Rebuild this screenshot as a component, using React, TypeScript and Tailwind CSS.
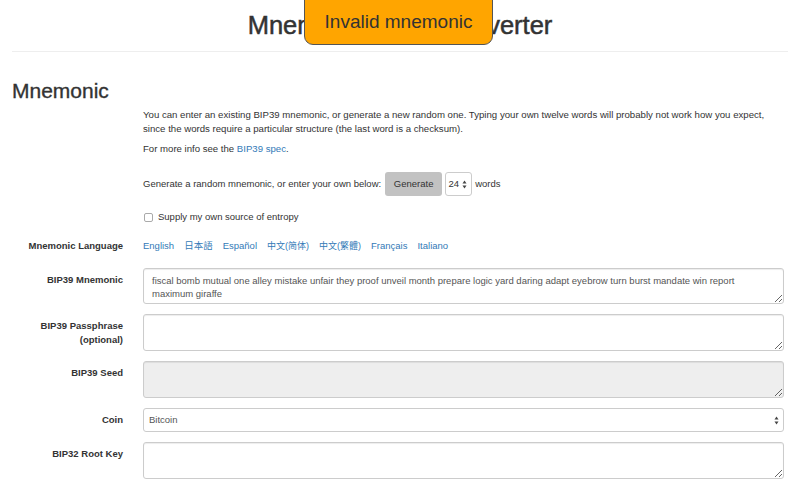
export default function App() {
  const languages = ['English', '日本語', 'Español', '中文(简体)', '中文(繁體)', 'Français', 'Italiano'];

  const Arrows = () => (
    <svg width="5" height="9" viewBox="0 0 5 9" className="text-[#444]">
      <path d="M2.5 0.5 L4.5 3.5 L0.5 3.5 Z" fill="currentColor" />
      <path d="M2.5 8.5 L4.5 5.5 L0.5 5.5 Z" fill="currentColor" />
    </svg>
  );

  const textareaCls =
    'block w-full resize-y rounded-[3px] border border-[#ccc] px-[8px] py-[5px] text-[9.5px] leading-[13px] text-[#555] shadow-[inset_0_1px_1px_rgba(0,0,0,0.075)] outline-none';

  return (
    <div
      className="relative h-[496px] w-full overflow-hidden bg-white text-[9.5px] leading-[14px] text-[#333]"
      style={{ fontFamily: '"Liberation Sans", "Noto Sans CJK SC", Arial, sans-serif' }}
    >
      {/* error toast over the heading */}
      <div className="absolute left-[304px] top-[-10px] flex h-[55px] w-[189px] items-end justify-center rounded-b-[9px] border border-[#555] bg-[#ffa500] pb-[11px]">
        <span className="text-[19px] leading-[22px] text-[#333]">Invalid mnemonic</span>
      </div>

      <div className="px-[12px] pt-[11px]">
        <h1 className="text-center text-[25.5px] font-medium leading-[28px] text-[#333] [-webkit-text-stroke:0.5px_#333]">
          Mnemonic Code Converter
        </h1>
        <hr className="mt-[12px] border-t border-[#eee]" />

        <h2 className="mt-[27px] text-[21px] font-medium leading-[23px] [-webkit-text-stroke:0.35px_#333]">Mnemonic</h2>

        <div className="grid grid-cols-[111px_1fr] gap-x-[20px] pr-[4px]">
          <div />
          <div className="pt-[6px]">
            <p className="text-[9.65px]">
              You can enter an existing BIP39 mnemonic, or generate a new random one. Typing your own twelve words will
              probably not work how you expect, since the words require a particular structure (the last word is a
              checksum).
            </p>
            <p className="mt-[6px] text-[9.6px]">
              For more info see the <span className="text-[#337ab7]">BIP39 spec</span>.
            </p>

            <div className="mt-[16px] flex h-[24px] items-center">
              <span>Generate a random mnemonic, or enter your own below:</span>
              <button className="ml-[4px] h-[24px] w-[57px] rounded-[3px] bg-[#c2c2c2] text-[9.5px] text-[#333]">
                Generate
              </button>
              <div className="ml-[3px] flex h-[24px] w-[27px] items-center justify-end gap-[3px] rounded-[3px] border border-[#ccc] pr-[4px]">
                <span>24</span>
                <Arrows />
              </div>
              <span className="ml-[3px]">words</span>
            </div>

            <div className="mt-[14px] flex items-center gap-[5px] pl-[1px]">
              <span className="h-[9px] w-[9px] rounded-[2px] border border-[#aaa] bg-white" />
              <span>Supply my own source of entropy</span>
            </div>
          </div>

          <div className="mt-[15px] text-right font-bold">Mnemonic Language</div>
          <div className="mt-[15px] flex items-center gap-[10px] text-[#337ab7]">
            {languages.map((l) => (
              <span key={l} className={l.startsWith('中文') ? 'text-[9px]' : ''}>
                {l}
              </span>
            ))}
          </div>

          <div className="mt-[15px] pt-[5px] text-right font-bold">BIP39 Mnemonic</div>
          <div className="mt-[15px]">
            <textarea
              className={`${textareaCls} h-[36px]`}
              defaultValue="fiscal bomb mutual one alley mistake unfair they proof unveil month prepare logic yard daring adapt eyebrow turn burst mandate win report maximum giraffe"
            />
          </div>

          <div className="mt-[10px] pt-[5px] text-right font-bold">
            BIP39 Passphrase
            <br />
            (optional)
          </div>
          <div className="mt-[10px]">
            <textarea className={`${textareaCls} h-[37px] bg-white`} />
          </div>

          <div className="mt-[10px] pt-[5px] text-right font-bold">BIP39 Seed</div>
          <div className="mt-[10px]">
            <textarea readOnly className={`${textareaCls} h-[37px] bg-[#eee]`} />
          </div>

          <div className="mt-[10px] pt-[5px] text-right font-bold">Coin</div>
          <div className="mt-[10px]">
            <div className="flex h-[24px] items-center justify-between rounded-[3px] border border-[#ccc] pl-[5px] pr-[4px] text-[#555]">
              <span>Bitcoin</span>
              <Arrows />
            </div>
          </div>

          <div className="mt-[10px] pt-[5px] text-right font-bold">BIP32 Root Key</div>
          <div className="mt-[10px]">
            <textarea className={`${textareaCls} h-[37px] bg-white`} />
          </div>
        </div>
      </div>
    </div>
  );
}
